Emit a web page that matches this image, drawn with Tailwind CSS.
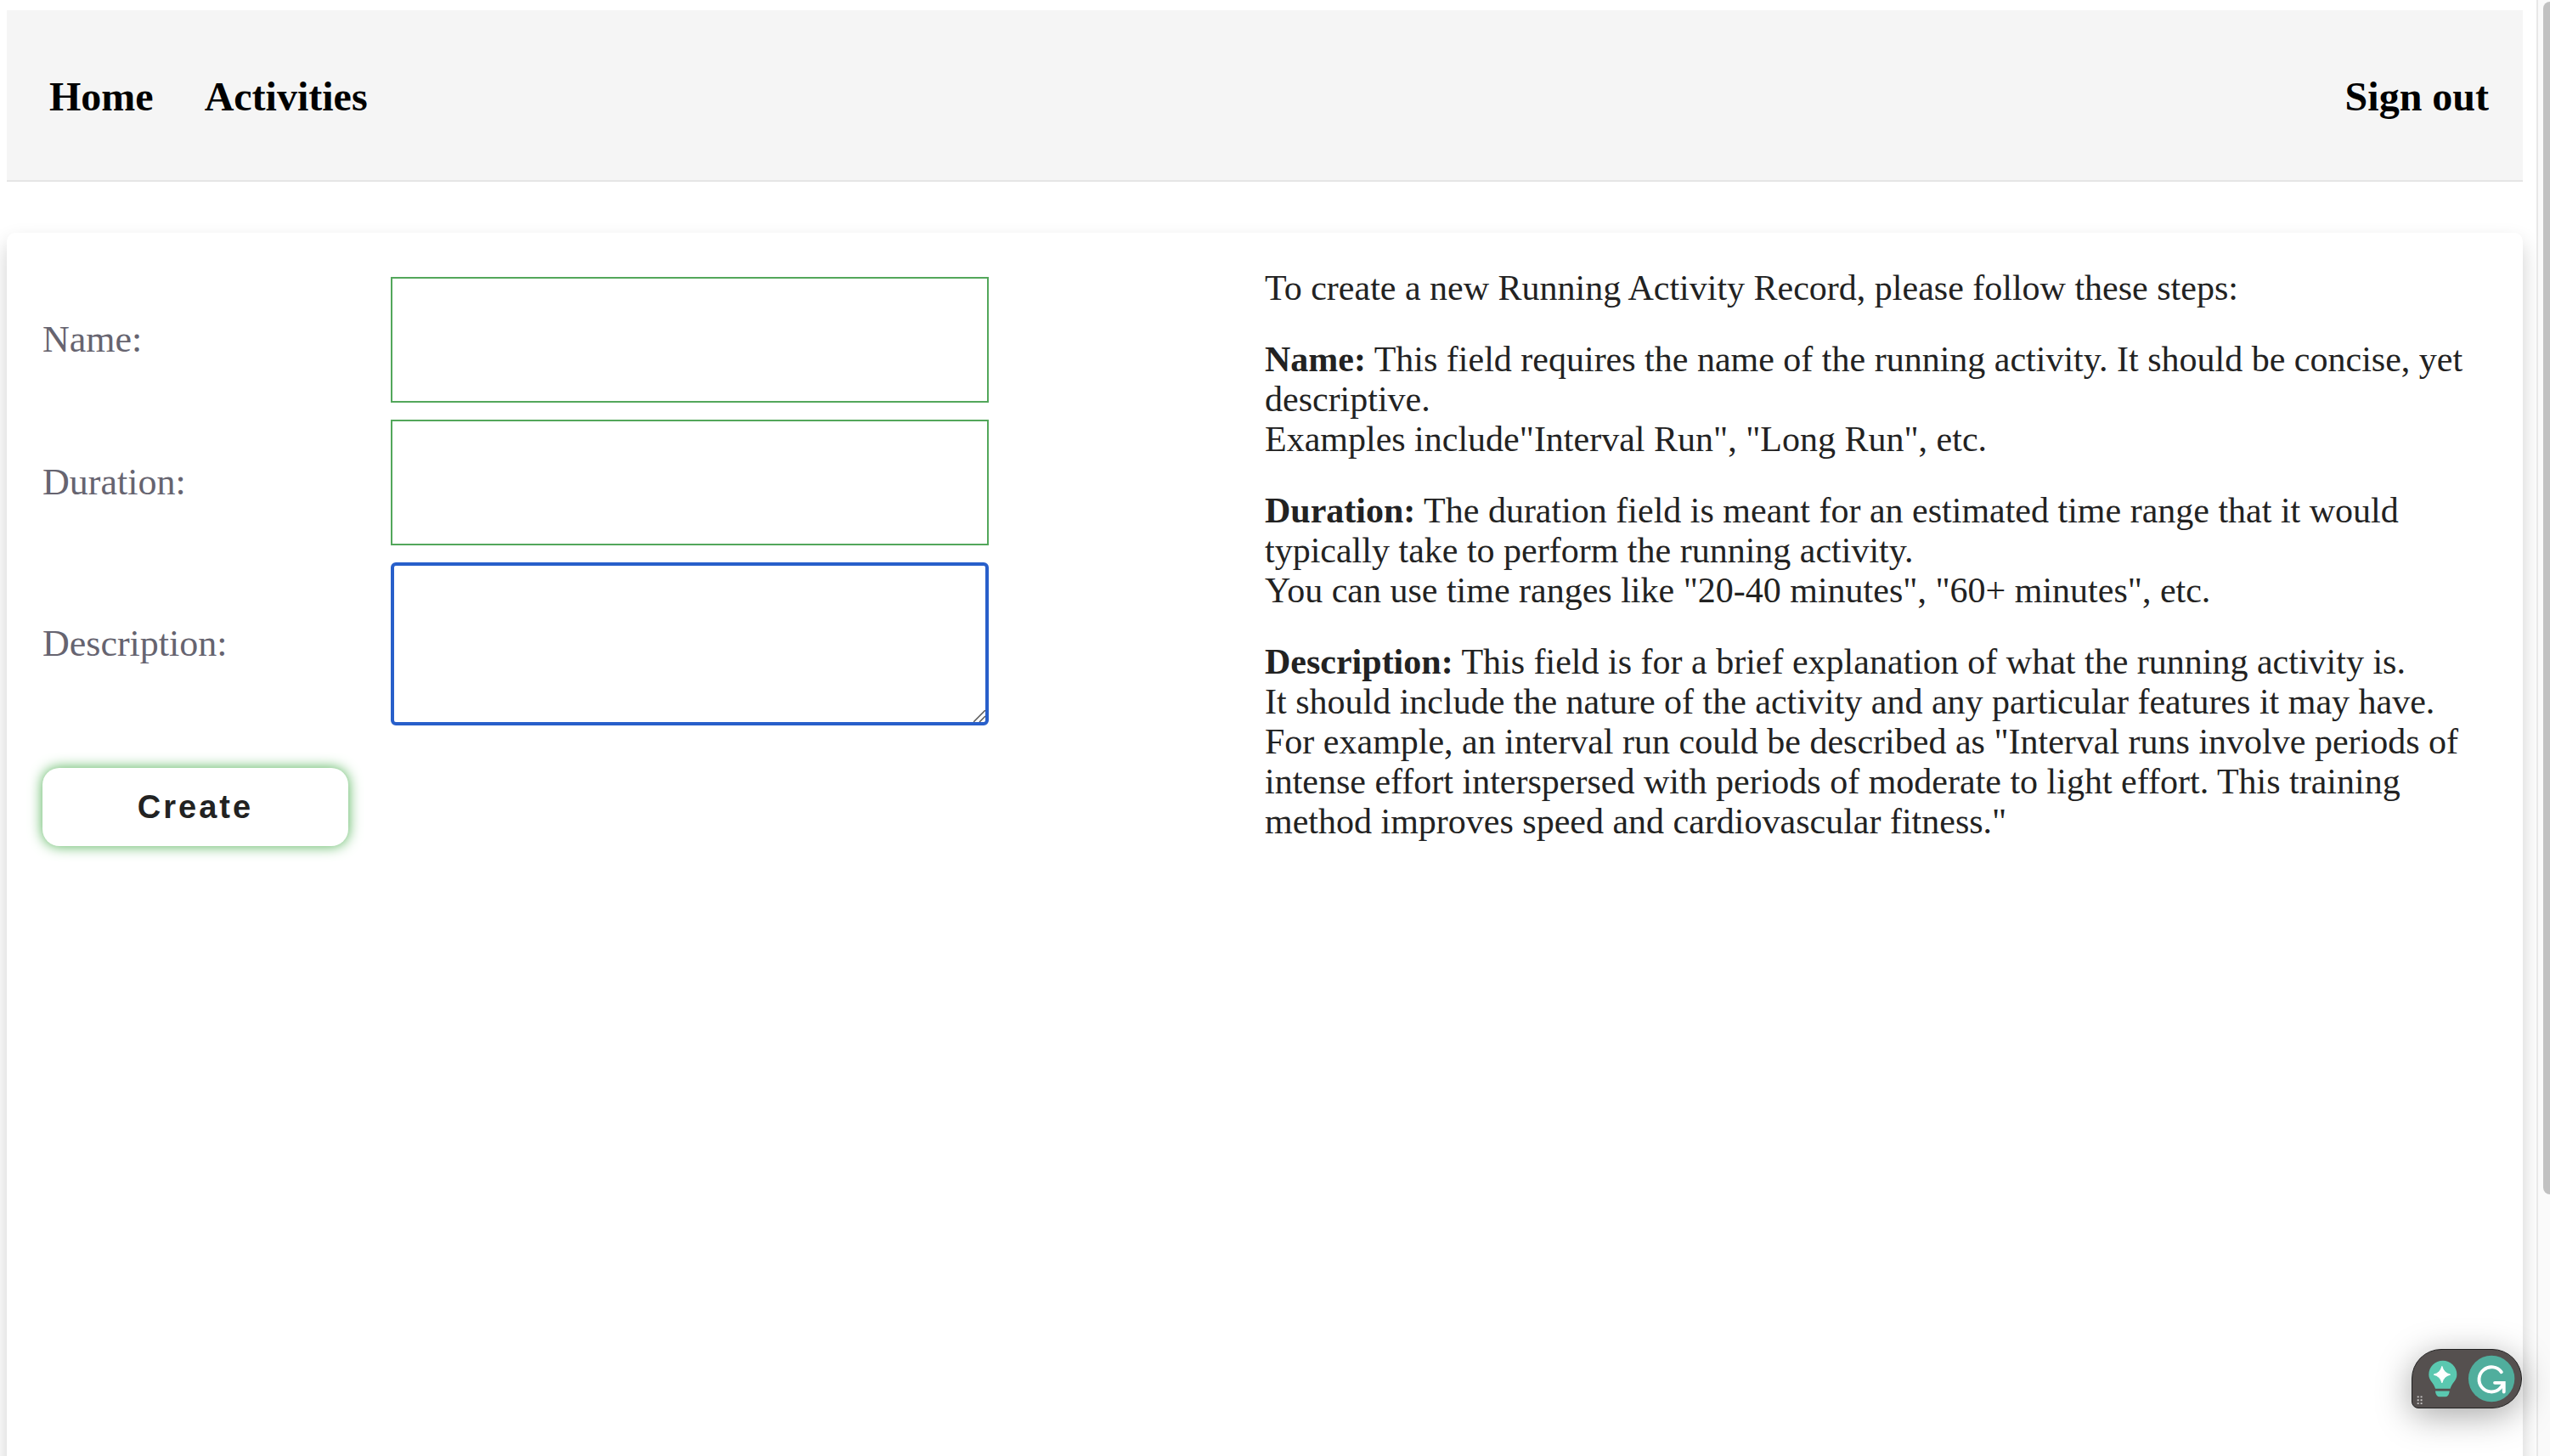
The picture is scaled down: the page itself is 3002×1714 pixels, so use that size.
<!DOCTYPE html>
<html lang="en">
<head>
<meta charset="utf-8">
<title>New Activity</title>
<script src="https://cdn.jsdelivr.net/npm/@tailwindcss/browser@4"></script>
</head>
<body class="bg-white font-['Liberation_Serif',serif] text-[#222222]">
<div class="flex h-screen overflow-hidden">
  <div class="min-w-0 flex-1 px-2 pr-4 pt-3">
    <header class="border-b-2 border-[#e5e5e5] bg-[#f5f5f5] pr-10 pl-[50px]">
      <nav class="flex h-[200px] items-center gap-[60px] pt-[3px] text-5xl font-bold text-black">
        <a href="#">Home</a>
        <a href="#">Activities</a>
        <a href="#" class="ml-auto">Sign out</a>
      </nav>
    </header>
    <main class="mt-[60px] grid min-h-screen grid-cols-2 items-start rounded-[10px] bg-white px-[42px] shadow-[0_12px_24px_rgba(0,0,0,0.19)]">
      <form class="pt-[52px]">
        <div class="grid grid-cols-[410px_704px] items-center gap-y-5 text-[44px] text-[#666470]">
          <label for="name">Name:</label>
          <input id="name" type="text" class="h-[148px] border-2 border-[#53a75b] bg-white px-6 outline-none">
          <label for="duration">Duration:</label>
          <input id="duration" type="text" class="h-[148px] border-2 border-[#53a75b] bg-white px-6 outline-none">
          <label for="description">Description:</label>
          <div class="relative flex">
            <textarea id="description" class="h-[192px] w-full resize-none rounded-md border-4 border-[#285fca] bg-white px-6 outline-none"></textarea>
            <svg class="pointer-events-none absolute right-1 bottom-1 h-[14px] w-[14px]" viewBox="0 0 14 14" fill="none" stroke="#555" stroke-width="1.5"><path d="M0 14L14 0M7 14L14 7"/></svg>
          </div>
        </div>
        <button type="button" class="mt-[50px] h-[92px] w-[360px] rounded-[20px] bg-white font-['Liberation_Sans',sans-serif] text-[38px] font-bold tracking-[3px] shadow-[0_0_16px_#4caf50]">Create</button>
      </form>
      <section class="space-y-[37px] pt-[42px] text-[42px] leading-[47px]">
        <p>To create a new Running Activity Record, please follow these steps:</p>
        <p><strong>Name:</strong> This field requires the name of the running activity. It should be concise, yet descriptive.<br>Examples include"Interval Run", "Long Run", etc.</p>
        <p><strong>Duration:</strong> The duration field is meant for an estimated time range that it would typically take to perform the running activity.<br>You can use time ranges like "20-40 minutes", "60+ minutes", etc.</p>
        <p><strong>Description:</strong> This field is for a brief explanation of what the running activity is.<br>It should include the nature of the activity and any particular features it may have.<br>For example, an interval run could be described as "Interval runs involve periods of intense effort interspersed with periods of moderate to light effort. This training method improves speed and cardiovascular fitness."</p>
      </section>
    </main>
  </div>
  <div class="relative w-4 border-l-2 border-[#e8e8e8] bg-[#fafafa] pt-0.5 pl-1.5">
    <div class="h-[82%] rounded-l-lg bg-[#c1c1c1]"></div>
  </div>
</div>
<div class="fixed right-[33px] bottom-[56px] flex h-[70px] w-[130px] items-center rounded-[35px] rounded-bl-lg border border-[#222] bg-[#55504f] shadow-[0_8px_40px_rgba(0,0,0,0.35)]">
  <svg class="h-full w-full" viewBox="0 0 130 70" fill="none">
    <path d="M36 13a17 17 0 0 1 17 17c0 7-6 10-8 17H27c-2-7-8-10-8-17a17 17 0 0 1 17-17Z" fill="#5ac8b0"/>
    <path d="M27 50h17v1q-1 6-5 6h-7q-4 0-5-6Z" fill="#5ac8b0"/>
    <path d="M35 20q2 8 10 10q-8 2-10 10q-2-8-10-10q8-2 10-10Z" fill="#fff" stroke="#fff" stroke-linejoin="round"/>
    <circle cx="95" cy="35" r="28" fill="#50ae9d"/>
    <path d="M107 27a15 15 0 1 0-2 20l5-6M99 40h11v11" stroke="#fff" stroke-width="4" stroke-linecap="round"/>
    <g fill="#c9c7c6"><path d="M5 56h2v2H5zM9 56h2v2H9zM5 60h2v2H5zM9 60h2v2H9zM5 64h2v2H5zM9 64h2v2H9z"/></g>
  </svg>
</div>
</body>
</html>
